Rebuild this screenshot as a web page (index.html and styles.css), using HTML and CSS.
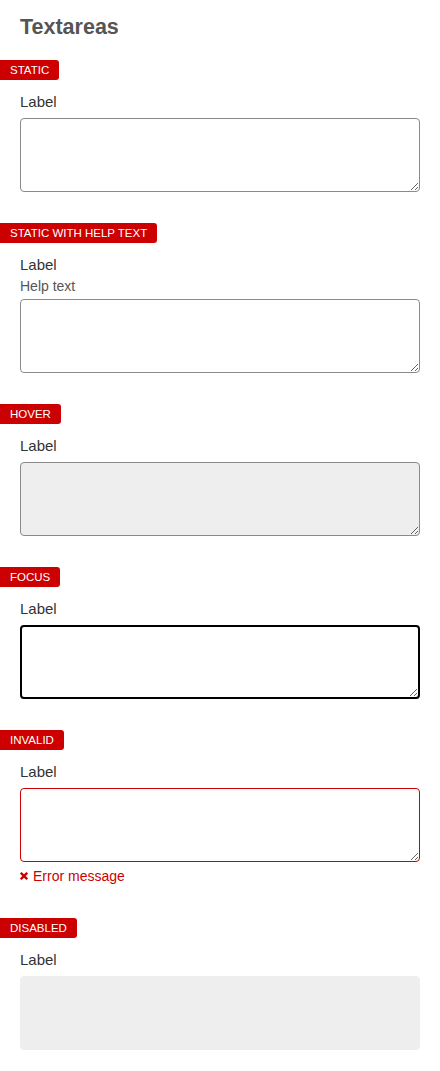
FILE: index.html
```html
<!DOCTYPE html>
<html lang="en">
<head>
<meta charset="utf-8">
<title>Textareas</title>
<link rel="stylesheet" href="styles.css">
</head>
<body>
<main class="page">
  <h1 class="title">Textareas</h1>

  <section class="demo">
    <span class="badge">STATIC</span>
    <div class="field">
      <label class="label" for="t1">Label</label>
      <textarea id="t1" class="ta"></textarea>
    </div>
  </section>

  <section class="demo">
    <span class="badge">STATIC WITH HELP TEXT</span>
    <div class="field">
      <label class="label label-help" for="t2">Label</label>
      <div class="help">Help text</div>
      <textarea id="t2" class="ta"></textarea>
    </div>
  </section>

  <section class="demo">
    <span class="badge">HOVER</span>
    <div class="field">
      <label class="label" for="t3">Label</label>
      <textarea id="t3" class="ta ta-hover"></textarea>
    </div>
  </section>

  <section class="demo">
    <span class="badge">FOCUS</span>
    <div class="field">
      <label class="label" for="t4">Label</label>
      <textarea id="t4" class="ta ta-focus"></textarea>
    </div>
  </section>

  <section class="demo demo-invalid">
    <span class="badge">INVALID</span>
    <div class="field">
      <label class="label" for="t5">Label</label>
      <textarea id="t5" class="ta ta-invalid"></textarea>
      <div class="error">
        <svg class="error-icon" width="8" height="8" viewBox="0 0 8 8" aria-hidden="true"><path d="M0.8 0.8 L7.2 7.2 M7.2 0.8 L0.8 7.2" stroke="#cc0000" stroke-width="2.3" fill="none"/></svg>
        <span>Error message</span>
      </div>
    </div>
  </section>

  <section class="demo">
    <span class="badge">DISABLED</span>
    <div class="field">
      <label class="label" for="t6">Label</label>
      <textarea id="t6" class="ta ta-disabled" disabled></textarea>
    </div>
  </section>
</main>
</body>
</html>
```

FILE: styles.css
```css
* { box-sizing: border-box; }

html, body {
  margin: 0;
  padding: 0;
  background: #ffffff;
}

body {
  font-family: "Liberation Sans", Arial, sans-serif;
  color: #333333;
}

.page {
  padding-top: 15px;
  display: flex;
  flex-direction: column;
}

.title {
  margin: 0 0 20px 20px;
  font-size: 21.5px;
  line-height: 25px;
  font-weight: bold;
  color: #555555;
}

.demo {
  display: flex;
  flex-direction: column;
  align-items: flex-start;
  margin-bottom: 31px;
}

.demo-invalid {
  margin-bottom: 32px;
}

.badge {
  display: block;
  height: 20px;
  line-height: 20px;
  padding: 0 10px;
  background: #cc0000;
  color: #ffffff;
  font-size: 11.5px;
  border-radius: 0 3px 3px 0;
}

.field {
  display: flex;
  flex-direction: column;
  padding: 12px 20px 0;
  width: 100%;
}

.label {
  display: block;
  font-size: 15px;
  line-height: 20px;
  color: #333333;
  margin-bottom: 6px;
}

.label-help {
  margin-bottom: 2px;
}

.help {
  font-size: 14px;
  line-height: 18px;
  color: #555555;
  margin-bottom: 4px;
}

.ta {
  display: block;
  width: 400px;
  height: 74px;
  margin: 0;
  padding: 8px;
  border: 1px solid #8a8a8a;
  border-radius: 4px;
  background: #ffffff;
  font-family: "Liberation Sans", Arial, sans-serif;
  font-size: 15px;
  color: #333333;
  outline: none;
}

.ta-hover {
  background: #eeeeee;
}

.ta-focus {
  border: 2px solid #000000;
}

.ta-invalid {
  border-color: #cc0000;
  color: #cc0000;
}

.ta-disabled {
  background: #eeeeee;
  border-color: #eeeeee;
  resize: none;
}

.error {
  display: flex;
  align-items: center;
  gap: 5px;
  margin-top: 4px;
  font-size: 14px;
  line-height: 20px;
  color: #cc0000;
}

.error-icon {
  flex: none;
}
```
